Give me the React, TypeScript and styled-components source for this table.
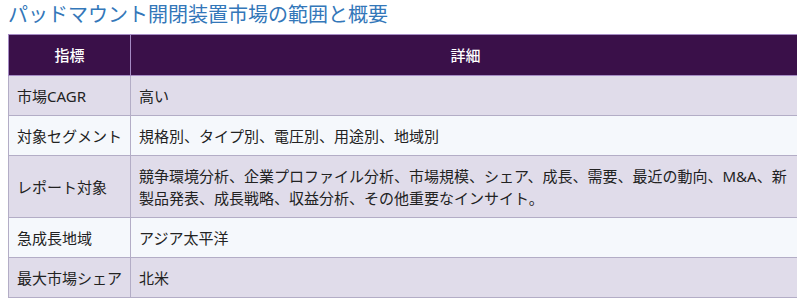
import React from "react";
import styled, { createGlobalStyle } from "styled-components";

const Global = createGlobalStyle`
  body {
    margin: 0 8px;
    background: #ffffff;
    font-family: "Noto Sans", "Noto Sans CJK JP", sans-serif;
  }
`;

const Title = styled.h2`
  margin: 0 0 6px;
  font-size: 20px;
  line-height: 28px;
  font-weight: 400;
  color: #3377b9;
  font-family: "Noto Sans CJK JP", sans-serif;
`;

const Table = styled.table`
  width: 793px;
  border-collapse: collapse;
  font-size: 15px;
  color: #222222;
`;

const HeadCell = styled.th<{ $w?: number }>`
  background: #3a1049;
  color: #ffffff;
  font-weight: 500;
  text-align: center;
  padding: 9px 8px;
  line-height: 22px;
  border: 1px solid #a58bc4;
  width: ${(p) => (p.$w ? `${p.$w}px` : "auto")};
`;

const Row = styled.tr<{ $alt: boolean }>`
  background: ${(p) => (p.$alt ? "#f5f8fc" : "#e0dcea")};
`;

const Cell = styled.td`
  padding: 8.5px 8px;
  line-height: 22px;
  border: 1px solid #b3adc6;
  vertical-align: middle;
`;

const rows: [string, string][] = [
  ["市場CAGR", "高い"],
  ["対象セグメント", "規格別、タイプ別、電圧別、用途別、地域別"],
  [
    "レポート対象",
    "競争環境分析、企業プロファイル分析、市場規模、シェア、成長、需要、最近の動向、M&A、新製品発表、成長戦略、収益分析、その他重要なインサイト。",
  ],
  ["急成長地域", "アジア太平洋"],
  ["最大市場シェア", "北米"],
];

export default function App() {
  return (
    <>
      <Global />
      <Title>パッドマウント開閉装置市場の範囲と概要</Title>
      <Table>
        <thead>
          <tr>
            <HeadCell $w={105}>指標</HeadCell>
            <HeadCell>詳細</HeadCell>
          </tr>
        </thead>
        <tbody>
          {rows.map(([k, v], i) => (
            <Row key={k} $alt={i % 2 === 1}>
              <Cell>{k}</Cell>
              <Cell>{v}</Cell>
            </Row>
          ))}
        </tbody>
      </Table>
    </>
  );
}
